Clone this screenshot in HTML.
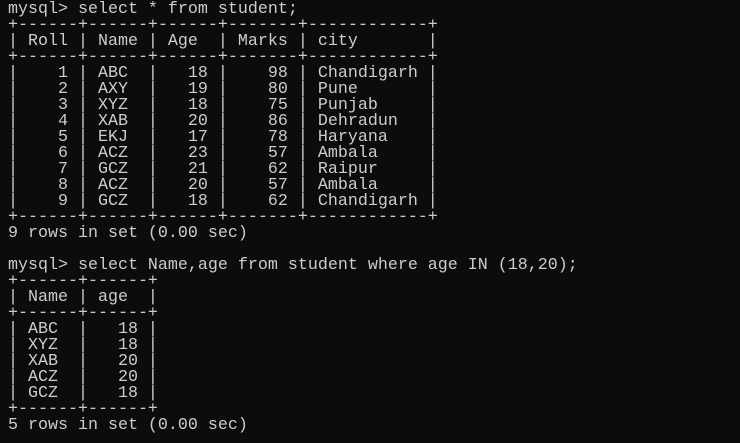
<!DOCTYPE html>
<html><head><meta charset="utf-8"><style>
html,body{margin:0;padding:0;background:#0c0c0c;width:740px;height:443px;overflow:hidden}
pre{margin:0;padding:2px 0 0 8px;font-family:"Liberation Mono",monospace;font-size:16.67px;line-height:16px;color:#cccccc}
</style></head><body><pre>mysql&gt; select * from student;
+------+------+------+-------+------------+
| Roll | Name | Age  | Marks | city       |
+------+------+------+-------+------------+
|    1 | ABC  |   18 |    98 | Chandigarh |
|    2 | AXY  |   19 |    80 | Pune       |
|    3 | XYZ  |   18 |    75 | Punjab     |
|    4 | XAB  |   20 |    86 | Dehradun   |
|    5 | EKJ  |   17 |    78 | Haryana    |
|    6 | ACZ  |   23 |    57 | Ambala     |
|    7 | GCZ  |   21 |    62 | Raipur     |
|    8 | ACZ  |   20 |    57 | Ambala     |
|    9 | GCZ  |   18 |    62 | Chandigarh |
+------+------+------+-------+------------+
9 rows in set (0.00 sec)

mysql&gt; select Name,age from student where age IN (18,20);
+------+------+
| Name | age  |
+------+------+
| ABC  |   18 |
| XYZ  |   18 |
| XAB  |   20 |
| ACZ  |   20 |
| GCZ  |   18 |
+------+------+
5 rows in set (0.00 sec)
</pre></body></html>
